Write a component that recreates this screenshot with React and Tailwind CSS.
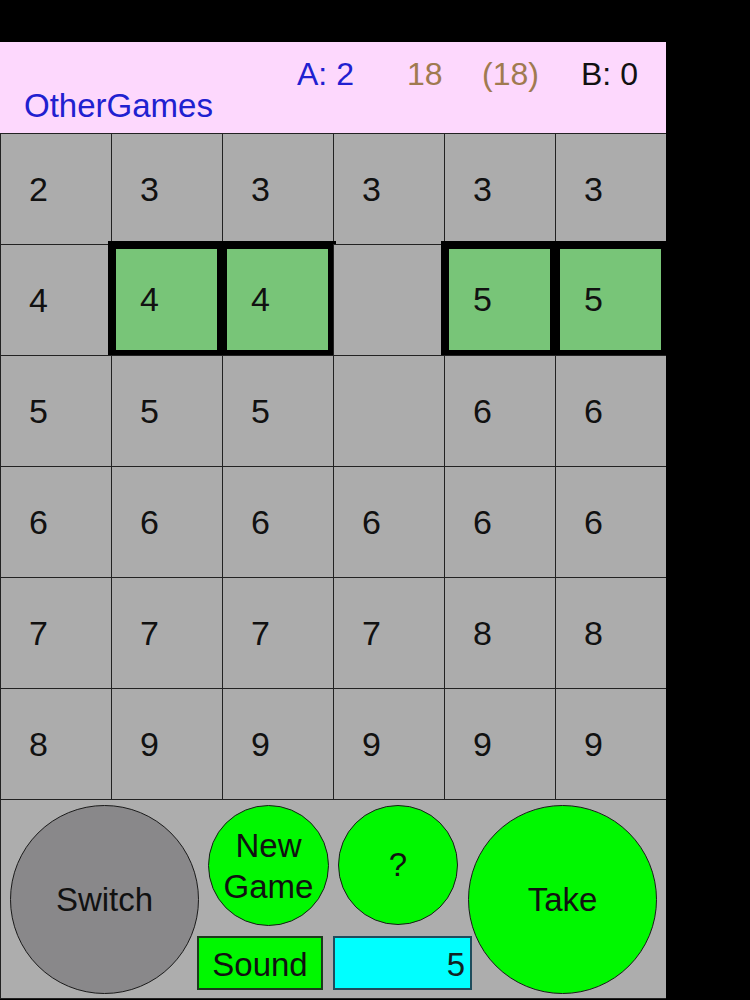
import React from "react";

const board = [
  [2, 3, 3, 3, 3, 3],
  [4, 4, 4, null, 5, 5],
  [5, 5, 5, null, 6, 6],
  [6, 6, 6, 6, 6, 6],
  [7, 7, 7, 7, 8, 8],
  [8, 9, 9, 9, 9, 9],
];

const picked = ["1-1", "1-2", "1-4", "1-5"];

function Cell({ value, selected }) {
  if (selected) {
    return (
      <div className="h-[111px] flex items-center pl-[24px] bg-[#78c578] border-[5px] border-black outline-[3px] outline-solid outline-black">
        {value}
      </div>
    );
  }
  return (
    <div className="h-[111px] flex items-center pl-[28px] bg-[#acacac] border-l border-t border-[#222]">
      {value}
    </div>
  );
}

function RoundButton({ size, color, children, className = "" }) {
  return (
    <button
      className={`${size} ${color} ${className} shrink-0 rounded-full border-[1.5px] border-[#1a1a1a] flex items-center justify-center text-[33px] text-[#111] text-center`}
    >
      {children}
    </button>
  );
}

export default function App() {
  return (
    <div className="w-[750px] h-[1000px] bg-black pt-[42px] overflow-hidden font-['Liberation_Sans',Arial,sans-serif]">
      {/* header */}
      <div className="w-[666px] h-[91px] bg-[#fdd8fd] pt-[16px]">
        <div className="flex h-[32px] text-[32px] leading-none pl-[297px]">
          <span className="w-[110px] text-[#2020d0]">A: 2</span>
          <span className="w-[75px] text-[#a07a50]">18</span>
          <span className="w-[99px] text-[#a07a50]">(18)</span>
          <span className="text-[#111]">B: 0</span>
        </div>
        <div className="pl-[24px] -mt-px text-[33px] leading-none text-[#2020d0]">
          OtherGames
        </div>
      </div>

      {/* board */}
      <div className="grid grid-cols-6 w-[666px] text-[34px] text-[#111]">
        {board.map((row, r) =>
          row.map((v, c) => (
            <Cell key={`${r}-${c}`} value={v} selected={picked.includes(`${r}-${c}`)} />
          ))
        )}
      </div>

      {/* controls */}
      <div className="w-[666px] h-[200px] bg-[#adadad] border-t border-l border-b border-[#222] flex items-start pl-[9px] pt-[5px]">
        <RoundButton size="w-[189px] h-[189px]" color="bg-[#89888a]">
          Switch
        </RoundButton>

        <div className="ml-[-2px] w-[275px] shrink-0 flex flex-col">
          <div className="flex">
            <RoundButton
              size="w-[121px] h-[121px]"
              color="bg-[#00f800]"
              className="ml-[11px] leading-[41px]"
            >
              New
              <br />
              Game
            </RoundButton>
            <RoundButton size="w-[120px] h-[120px]" color="bg-[#00f800]" className="ml-[9px] text-[31px]">
              ?
            </RoundButton>
          </div>
          <div className="flex mt-[10px]">
            <div className="w-[126px] h-[54px] bg-[#00f800] border-2 border-[#1b3a1b] flex items-center justify-center pt-[3px] text-[33px] text-[#111]">
              Sound
            </div>
            <div className="ml-[10px] w-[139px] h-[54px] bg-[#00ffff] border-2 border-[#1e4c5c] flex items-center justify-end pr-[5px] pt-[3px] text-[33px] text-[#122]">
              5
            </div>
          </div>
        </div>

        <RoundButton size="w-[189px] h-[189px]" color="bg-[#00f800]" className="ml-[-4px]">
          Take
        </RoundButton>
      </div>
    </div>
  );
}
